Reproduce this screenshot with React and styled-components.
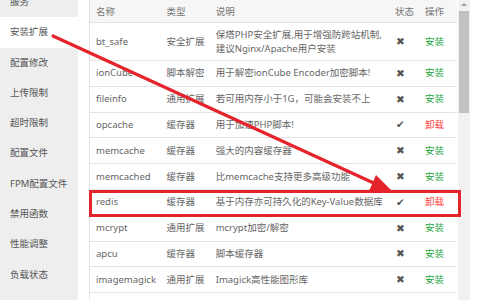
import React from 'react';
import styled, {createGlobalStyle} from 'styled-components';

const GlobalStyle = createGlobalStyle`
    html, body {
        margin: 0;
        padding: 0;
        background: #fff;
    }
    body {
        font-family: "Noto Sans", "Noto Sans CJK SC", sans-serif;
        font-size: 9.5px;
        color: #666;
    }
`;

const menu = ['服务', '安装扩展', '配置修改', '上传限制', '超时限制', '配置文件',
    'FPM配置文件', '禁用函数', '性能调整', '负载状态'];

const extensions = [
    {name: 'bt_safe', type: '安全扩展', desc: ['保塔PHP安全扩展,用于增强防跨站机制,', '建议Nginx/Apache用户安装'], on: false},
    {name: 'ionCube', type: '脚本解密', desc: ['用于解密ionCube Encoder加密脚本!'], on: false},
    {name: 'fileinfo', type: '通用扩展', desc: ['若可用内存小于1G，可能会安装不上'], on: false},
    {name: 'opcache', type: '缓存器', desc: ['用于加速PHP脚本!'], on: true},
    {name: 'memcache', type: '缓存器', desc: ['强大的内容缓存器'], on: false},
    {name: 'memcached', type: '缓存器', desc: ['比memcache支持更多高级功能'], on: false},
    {name: 'redis', type: '缓存器', desc: ['基于内存亦可持久化的Key-Value数据库'], on: true},
    {name: 'mcrypt', type: '通用扩展', desc: ['mcrypt加密/解密'], on: false},
    {name: 'apcu', type: '缓存器', desc: ['脚本缓存器'], on: false},
    {name: 'imagemagick', type: '通用扩展', desc: ['Imagick高性能图形库'], on: false},
];

const App = () => {
    return <Page>
        <GlobalStyle/>
        <Sidebar>
            {menu.map(item =>
                <MenuItem key={item} $active={item === '安装扩展'}>{item}</MenuItem>
            )}
        </Sidebar>
        <Content>
            <Table>
                <colgroup>
                    <col style={{width: 71}}/>
                    <col style={{width: 49}}/>
                    <col style={{width: 179}}/>
                    <col style={{width: 30}}/>
                    <col style={{width: 38}}/>
                </colgroup>
                <thead>
                    <tr>
                        <Th>名称</Th>
                        <Th>类型</Th>
                        <Th>说明</Th>
                        <Th>状态</Th>
                        <Th>操作</Th>
                    </tr>
                </thead>
                <tbody>
                    {extensions.map(ext =>
                        <Row key={ext.name} $tall={ext.desc.length > 1}>
                            <Td>{ext.name}</Td>
                            <Td>{ext.type}</Td>
                            <Td>{ext.desc.map(line => <div key={line}>{line}</div>)}</Td>
                            <Td><Status>{ext.on ? '✔' : '✖'}</Status></Td>
                            <Td><Action $on={ext.on}>{ext.on ? '卸载' : '安装'}</Action></Td>
                        </Row>
                    )}
                    <Row>
                        <Td/><Td/><Td/><Td/><Td/>
                    </Row>
                </tbody>
            </Table>
        </Content>
        <Scrollbar>
            <ScrollArrow/>
            <ScrollThumb/>
        </Scrollbar>
        <Highlight/>
        <Arrow width="480" height="300" viewBox="0 0 480 300">
            <line x1="53" y1="36" x2="378" y2="185" stroke="#e5232a" strokeWidth="3.2" strokeLinecap="round"/>
            <polygon points="393,192 369,191 376,175" fill="#e5232a"/>
        </Arrow>
    </Page>
}

export default App;

const Page = styled.div`
    position: relative;
    width: 480px;
    height: 300px;
    overflow: hidden;
    display: flex;
    align-items: flex-start;
`;

const Sidebar = styled.div`
    width: 78px;
    height: 300px;
    flex-shrink: 0;
    background: #eeeeee;
    overflow: hidden;
`;

const MenuItem = styled.div`
    height: 30.3px;
    line-height: 30px;
    padding-left: 10px;
    color: #555;
    background: ${p => p.$active ? '#fff' : 'transparent'};
    &:first-child {
        margin-top: -13px;
    }
`;

const Content = styled.div`
    margin-left: 11px;
    width: 368px;
    flex-shrink: 0;
`;

const Table = styled.table`
    width: 368px;
    table-layout: fixed;
    border-collapse: collapse;
    border-left: 1px solid #e2e2e2;
`;

const Th = styled.th`
    height: 22px;
    padding: 0 0 0 6px;
    background: #f6f6f6;
    font-weight: normal;
    text-align: left;
    color: #777;
    border-bottom: 1px solid #e2e2e2;
`;

const Row = styled.tr`
    td {
        height: ${p => p.$tall ? '37px' : '24.8px'};
    }
`;

const Td = styled.td`
    padding: 0 0 0 6px;
    border-bottom: 1px solid #e4e4e4;
    line-height: 14px;
    white-space: nowrap;
    overflow: visible;
    vertical-align: middle;
`;

const Status = styled.span`
    font-family: "DejaVu Sans", sans-serif;
    font-size: 10.5px;
    color: #555;
    padding-left: 1px;
`;

const Action = styled.span`
    color: ${p => p.$on ? '#f44' : '#20a53a'};
`;

const Scrollbar = styled.div`
    margin-left: 1px;
    width: 12px;
    height: 300px;
    flex-shrink: 0;
    background: #f1f1f1;
    display: flex;
    flex-direction: column;
    align-items: center;
`;

const ScrollArrow = styled.div`
    margin-top: 3px;
    width: 0;
    height: 0;
    border-left: 3px solid transparent;
    border-right: 3px solid transparent;
    border-bottom: 3px solid #a3a3a3;
`;

const ScrollThumb = styled.div`
    margin-top: 5px;
    width: 10px;
    height: 102px;
    background: #c1c1c1;
`;

const Highlight = styled.div`
    position: absolute;
    left: 89px;
    top: 190px;
    width: 366px;
    height: 21px;
    border: 3px solid #e5232a;
    pointer-events: none;
`;

const Arrow = styled.svg`
    position: absolute;
    left: 0;
    top: 0;
    pointer-events: none;
`;
